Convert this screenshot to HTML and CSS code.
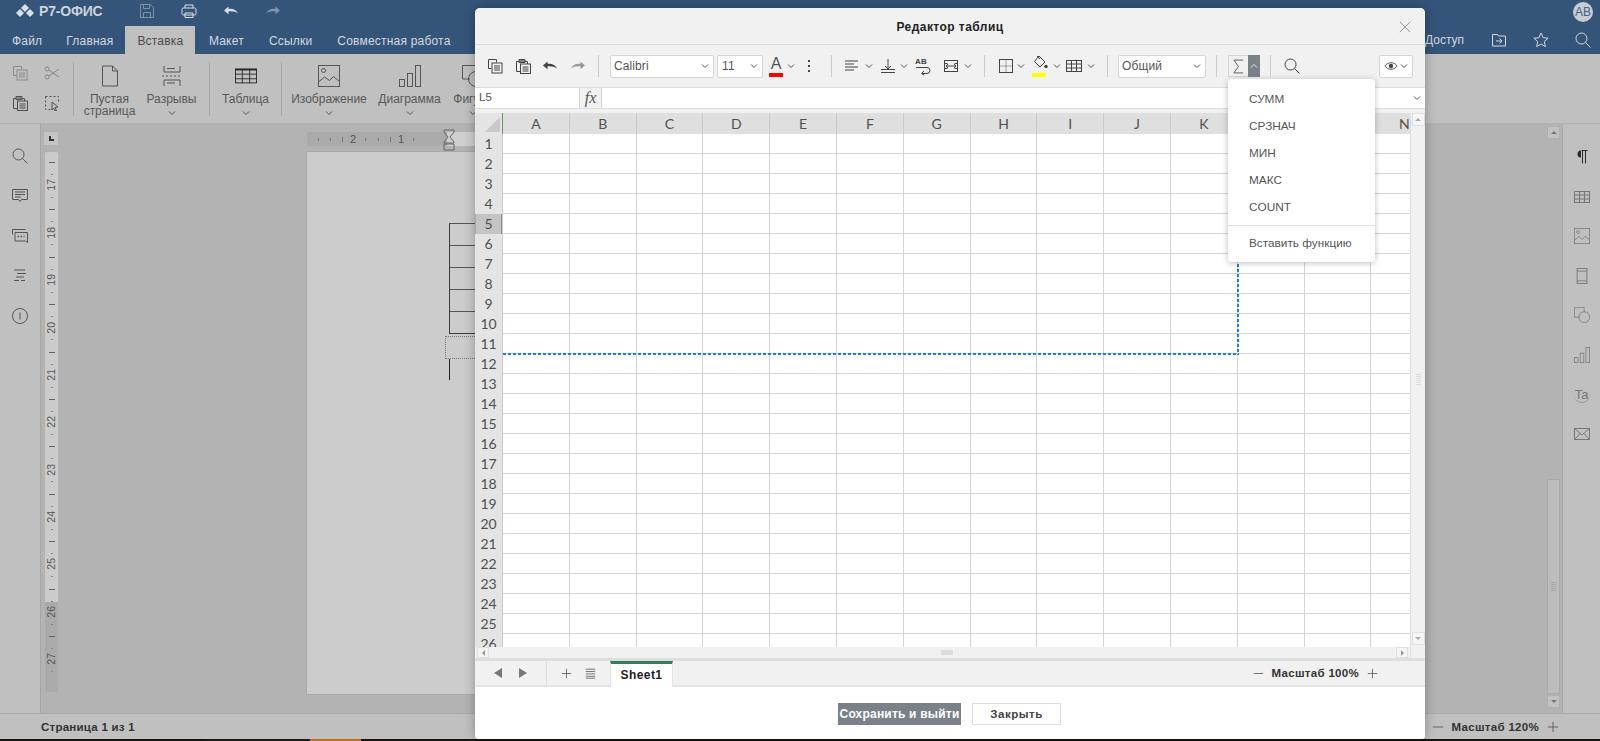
FILE: index.html
```html
<!DOCTYPE html>
<html lang="ru">
<head>
<meta charset="utf-8">
<title>Р7-Офис</title>
<link rel="stylesheet" href="styles.css">
</head>
<body>
<svg class="defs" width="0" height="0" aria-hidden="true">
  <symbol id="copy" viewBox="0 0 16 16"><path d="M1.500 1.500h8v3M1.500 1.500v9h3"/><rect x="5" y="5" width="10" height="10"/><path d="M7 8h6M7 10h6M7 12h6"/></symbol>
  <symbol id="paste" viewBox="0 0 16 16"><path d="M4 3.500H1.500v10H5"/><path d="M4 1.500h6v3H4z" fill="#888"/><path d="M10 3.500h2.500V6"/><rect x="5.500" y="6" width="10" height="9.500"/><path d="M7.500 9h6M7.500 11h6M7.500 13h6"/></symbol>
  <symbol id="undo" viewBox="0 0 16 16"><path class="solid" d="M1 7.500l4.500-4v2.300c4.500-.6 8 1 9.500 4.700-2.500-2-5.500-2.700-9.500-2.200v3z"/></symbol>
  <symbol id="redo" viewBox="0 0 16 16"><path class="solid" d="M15 7.500l-4.500-4v2.300c-4.500-.6-8 1-9.500 4.700 2.500-2 5.500-2.700 9.500-2.200v3z"/></symbol>
  <symbol id="chev" viewBox="0 0 8 8"><path d="M1 2.500l3 3 3-3"/></symbol>
  <symbol id="chevup" viewBox="0 0 8 8"><path d="M1 5.500l3-3 3 3"/></symbol>
  <symbol id="search" viewBox="0 0 16 16"><circle cx="6.500" cy="6.500" r="5.500"/><path d="M10.500 10.500l5 5"/></symbol>
  <symbol id="align" viewBox="0 0 16 16"><path d="M1 3h13M1 6h9M1 9h13M1 12h9"/></symbol>
  <symbol id="valign" viewBox="0 0 16 16"><path d="M8 1v10M5 8l3 3 3-3M1 11.500h14M1 14.500h14"/></symbol>
  <symbol id="merge" viewBox="0 0 16 16"><rect x="1.500" y="2.500" width="13" height="11"/><path d="M3 8h10M3 8l2-2M3 8l2 2M13 8l-2-2M13 8l-2 2M1.500 5.500h3M11.500 5.500h3M1.500 10.500h3M11.500 10.500h3"/></symbol>
  <symbol id="borders" viewBox="0 0 16 16"><rect x="1.500" y="1.500" width="13" height="13"/><path class="faint" d="M8 1.500v13M1.500 8h13"/></symbol>
  <symbol id="fill" viewBox="0 0 16 16"><path d="M7 1l6 6-5 5-5.500-5.500z"/><path d="M5 1l3 3"/><circle class="solid" cx="14" cy="11.500" r="1.700"/></symbol>
  <symbol id="table" viewBox="0 0 16 16"><rect x="0.500" y="2.500" width="15" height="11"/><path d="M0.500 6h15M0.500 10h15M5.500 2.500v11M10.500 2.500v11"/></symbol>
  <symbol id="eye" viewBox="0 0 16 16"><path d="M1 8c3-5 11-5 14 0-3 5-11 5-14 0z"/><circle class="solid" cx="8" cy="8" r="2.500"/></symbol>
  <symbol id="sigma" viewBox="0 0 12 16"><path d="M11 1H1l5 7-5 7h10"/></symbol>
  <symbol id="plus" viewBox="0 0 14 14"><path d="M7 1v12M1 7h12"/></symbol>
  <symbol id="minus" viewBox="0 0 14 14"><path d="M1 7h12"/></symbol>
  <symbol id="list" viewBox="0 0 14 14"><path d="M1 1.500h12M1 4.500h12M1 7.500h12M1 10.500h12M1 13h12"/></symbol>
  <symbol id="close" viewBox="0 0 14 14"><path d="M1 1l12 12M13 1L1 13"/></symbol>
  <symbol id="save" viewBox="0 0 16 16"><path d="M1.500 1.500h10l3 3v10h-13z"/><path d="M4.500 1.500v4h6v-4M4.500 14.500v-5h7v5"/></symbol>
  <symbol id="print" viewBox="0 0 16 16"><rect x="1" y="5" width="14" height="7" rx="1.500"/><path d="M4 5V2h8v3M4 10h8v4.500H4z"/></symbol>
  <symbol id="folder" viewBox="0 0 16 16"><path d="M1.500 2.500h5l1 1.500h7v10h-13z"/><path d="M5 9h6M8.500 6.500L11 9l-2.500 2.500"/></symbol>
  <symbol id="star" viewBox="0 0 16 16"><path d="M8 1l2.100 4.700 5 .5-3.800 3.400 1.100 5L8 12l-4.400 2.600 1.100-5L.9 6.200l5-.5z"/></symbol>
  <symbol id="cut" viewBox="0 0 16 16"><circle cx="3" cy="4" r="2"/><circle cx="3" cy="12" r="2"/><path d="M4.800 5L15 12M4.800 11L15 4"/></symbol>
  <symbol id="select" viewBox="0 0 16 16"><path class="dots" d="M1.500 1.500h13v6M1.500 1.500v13h6"/><path d="M8 7l6 5-3 .5 1.500 3-1.500.5-1.500-3-1.500 2z"/></symbol>
  <symbol id="blank" viewBox="0 0 18 22"><path d="M1.500 1h10l5 5v15h-15z"/><path d="M11.500 1v5h5"/></symbol>
  <symbol id="breaks" viewBox="0 0 20 22"><path d="M2 1v6h16V1M5 3.500h8M2 21v-6h16v6M5 18h8"/><path class="dots" d="M0 11h20"/></symbol>
  <symbol id="grid-big" viewBox="0 0 24 16"><path class="thick" d="M0 1h24"/><rect x="0.500" y="0.500" width="23" height="15"/><path d="M0 6h24M0 11h24M8 0v16M16 0v16"/></symbol>
  <symbol id="image" viewBox="0 0 22 22"><rect x="0.500" y="0.500" width="21" height="21"/><circle cx="5.500" cy="5.500" r="2"/><path d="M0.500 17l6-5 5 3.500 4-4 6 5"/></symbol>
  <symbol id="chart" viewBox="0 0 22 22"><rect x="0.500" y="14.500" width="5" height="7"/><rect x="8.500" y="8.500" width="5" height="13"/><rect x="16.500" y="0.500" width="5" height="21"/></symbol>
  <symbol id="shape" viewBox="0 0 22 22"><path d="M8 14H0.500V0.500H14V7"/><circle cx="14" cy="14" r="7.500"/></symbol>
  <symbol id="comment" viewBox="0 0 16 16"><path d="M0.500 1.500h15v10H9.500L8 13.500 6.500 11.500h-6z"/><path d="M3 4h10M3 6.500h10M3 9h6"/></symbol>
  <symbol id="chat" viewBox="0 0 16 16"><path d="M0.500 6.500V1.500h13"/><path d="M3 4.500h12.500v10l-2-1.500H3z"/><path class="dots2" d="M5.500 8.500h7"/></symbol>
  <symbol id="nav" viewBox="0 0 16 16"><path d="M2 2h11M5 5.500h9M4 9h8M2 12.500h5M9 12.500h4"/></symbol>
  <symbol id="info" viewBox="0 0 16 16"><circle cx="8" cy="8" r="7.500"/><path d="M8 4.500v7"/></symbol>
  <symbol id="para" viewBox="0 0 16 16"><path class="solid" d="M7 1.500a3.500 3.500 0 0 0 0 7z"/><path d="M7.500 1.500h6M8.500 1.500v13M11.500 1.500v13"/></symbol>
  <symbol id="header" viewBox="0 0 16 18"><rect x="2.500" y="0.500" width="11" height="17"/><path d="M2.500 3.500h11M2.500 14.500h11"/></symbol>
  <symbol id="mail" viewBox="0 0 16 14"><rect x="0.500" y="1.500" width="15" height="11"/><path d="M0.500 1.500L8 8l7.500-6.500M0.500 12.500l5.500-6M15.500 12.500l-5.500-6"/></symbol>
</svg>

<div class="app">
  <header class="titlebar">
    <div class="logo">
      <svg class="logo-mark" viewBox="0 0 20 14" aria-hidden="true"><path d="M10 0l4 4-4 4-4-4zM5 5l4 4-4 4-4-4zM15 5l4 4-4 4-4-4z"/></svg>
      <span>Р7-ОФИС</span>
    </div>
    <svg class="tic dim"><use href="#save"/></svg>
    <svg class="tic"><use href="#print"/></svg>
    <svg class="tic"><use href="#undo"/></svg>
    <svg class="tic dim"><use href="#redo"/></svg>
    <div class="avatar">АВ</div>
  </header>

  <nav class="tabs">
    <span class="tab">Файл</span>
    <span class="tab">Главная</span>
    <span class="tab active">Вставка</span>
    <span class="tab">Макет</span>
    <span class="tab">Ссылки</span>
    <span class="tab">Совместная работа</span>
    <div class="tabs-right">
      <span class="access">Доступ</span>
      <svg class="ric"><use href="#folder"/></svg>
      <svg class="ric"><use href="#star"/></svg>
      <svg class="ric"><use href="#search"/></svg>
    </div>
  </nav>

  <section class="ribbon">
    <div class="mini-grid">
      <svg class="ri-s dim"><use href="#copy"/></svg>
      <svg class="ri-s dim"><use href="#cut"/></svg>
      <svg class="ri-s"><use href="#paste"/></svg>
      <svg class="ri-s"><use href="#select"/></svg>
    </div>
    <i class="rsep"></i>
    <div class="big w-blank"><svg class="big-ic"><use href="#blank"/></svg><span>Пустая<br>страница</span></div>
    <div class="big w-break"><svg class="big-ic"><use href="#breaks"/></svg><span>Разрывы</span><svg class="rchev"><use href="#chev"/></svg></div>
    <i class="rsep"></i>
    <div class="big w-table"><svg class="big-ic dark"><use href="#grid-big"/></svg><span>Таблица</span><svg class="rchev"><use href="#chev"/></svg></div>
    <i class="rsep"></i>
    <div class="big w-image"><svg class="big-ic"><use href="#image"/></svg><span>Изображение</span><svg class="rchev"><use href="#chev"/></svg></div>
    <div class="big w-chart"><svg class="big-ic"><use href="#chart"/></svg><span>Диаграмма</span><svg class="rchev"><use href="#chev"/></svg></div>
    <div class="big w-shape"><svg class="big-ic"><use href="#shape"/></svg><span>Фигура</span><svg class="rchev"><use href="#chev"/></svg></div>
  </section>

  <main class="workspace">
    <aside class="leftbar">
      <svg class="side"><use href="#search"/></svg>
      <svg class="side"><use href="#comment"/></svg>
      <svg class="side"><use href="#chat"/></svg>
      <svg class="side"><use href="#nav"/></svg>
      <svg class="side"><use href="#info"/></svg>
    </aside>

    <div class="doc">
      <div class="vcol">
        <div class="tabstop"><b></b></div>
        <div class="vruler">
          <span class="vcell"><em>17</em></span><span class="vcell"><em>18</em></span><span class="vcell"><em>19</em></span><span class="vcell"><em>20</em></span><span class="vcell"><em>21</em></span><span class="vcell"><em>22</em></span><span class="vcell"><em>23</em></span><span class="vcell"><em>24</em></span><span class="vcell"><em>25</em></span><span class="vcell"><em>26</em></span><span class="vcell"><em>27</em></span>
        </div>
      </div>
      <div class="pagecol">
        <div class="hruler">
          <span class="hcell hfirst"></span>
          <span class="hcell">2</span>
          <span class="hcell">1</span>
          <span class="hlight"></span>
          <svg class="hourglass" viewBox="0 0 12 22"><path d="M1 1h10v2L7 8l4 5v1H1v-1l4-5-4-5zM1 15h10v6H1z"/></svg>
        </div>
        <div class="page">
          <div class="dtable">
            <div class="drow"></div><div class="drow"></div><div class="drow"></div><div class="drow"></div><div class="drow"></div>
          </div>
          <div class="dbox"></div>
          <div class="caret"></div>
        </div>
      </div>
      <div class="dscroll">
        <span class="sbtn up"></span>
        <span class="strack"><span class="sthumb"></span></span>
        <span class="sbtn down"></span>
      </div>
    </div>

    <aside class="rightbar">
      <svg class="side strong"><use href="#para"/></svg>
      <svg class="side"><use href="#table"/></svg>
      <svg class="side"><use href="#image"/></svg>
      <svg class="side"><use href="#header"/></svg>
      <svg class="side"><use href="#shape"/></svg>
      <svg class="side"><use href="#chart"/></svg>
      <span class="side ta">Ta</span>
      <svg class="side"><use href="#mail"/></svg>
    </aside>
  </main>

  <footer class="status">
    <span class="pageinfo">Страница 1 из 1</span>
    <div class="zoomer">
      <svg class="zi"><use href="#minus"/></svg>
      <span>Масштаб 120%</span>
      <svg class="zi"><use href="#plus"/></svg>
    </div>
  </footer>
  <div class="taskstrip"><i class="s1"></i><i class="s2"></i><i class="s3"></i></div>
</div>

<div class="modal">
  <div class="m-title">
    <span>Редактор таблиц</span>
    <svg class="m-close"><use href="#close"/></svg>
  </div>

  <div class="m-tools">
    <svg class="ic"><use href="#copy"/></svg>
    <svg class="ic m12"><use href="#paste"/></svg>
    <svg class="ic m11"><use href="#undo"/></svg>
    <svg class="ic m12 off"><use href="#redo"/></svg>
    <i class="sep m12"></i>
    <div class="combo font m11">Calibri<svg class="chev"><use href="#chev"/></svg></div>
    <div class="combo size m3">11<svg class="chev"><use href="#chev"/></svg></div>
    <div class="acolor m6">A<b></b></div>
    <svg class="chev m4"><use href="#chev"/></svg>
    <div class="dots m11"><b></b><b></b><b></b></div>
    <i class="sep m19"></i>
    <svg class="ic m12"><use href="#align"/></svg>
    <svg class="chev m5"><use href="#chev"/></svg>
    <svg class="ic m7"><use href="#valign"/></svg>
    <svg class="chev m4"><use href="#chev"/></svg>
    <div class="wrap m7"><span>AB</span><svg viewBox="0 0 16 8"><path d="M1 1.500h11a3 3 0 0 1 0 6H7M9 5l-2.500 2.500L9 9"/></svg></div>
    <svg class="ic m12"><use href="#merge"/></svg>
    <svg class="chev m5"><use href="#chev"/></svg>
    <i class="sep m12"></i>
    <svg class="ic m13"><use href="#borders"/></svg>
    <svg class="chev m3"><use href="#chev"/></svg>
    <div class="fillic m7"><svg class="ic"><use href="#fill"/></svg><b></b></div>
    <svg class="chev m5"><use href="#chev"/></svg>
    <svg class="ic m5"><use href="#table"/></svg>
    <svg class="chev m5"><use href="#chev"/></svg>
    <i class="sep m12"></i>
    <div class="combo fmt m10">Общий<svg class="chev"><use href="#chev"/></svg></div>
    <i class="sep m10"></i>
    <div class="sum m11"><span class="sum-s"><svg class="sigma"><use href="#sigma"/></svg></span><span class="sum-a"><svg class="chev"><use href="#chevup"/></svg></span></div>
    <i class="sep m10"></i>
    <svg class="ic search m13"><use href="#search"/></svg>
    <div class="view"><svg class="ic"><use href="#eye"/></svg><svg class="chev"><use href="#chev"/></svg></div>
  </div>

  <div class="m-formula">
    <span class="namebox">L5</span>
    <span class="fx">fx</span>
    <span class="finput"><svg class="chev"><use href="#chev"/></svg></span>
  </div>

  <div class="sheet">
    <div class="sheet-main">
      <div class="colhead">
        <span class="corner"><i></i></span>
        <span class="col">A</span><span class="col">B</span><span class="col">C</span><span class="col">D</span><span class="col">E</span><span class="col">F</span><span class="col">G</span><span class="col">H</span><span class="col">I</span><span class="col">J</span><span class="col">K</span><span class="col">L</span><span class="col">M</span><span class="col">N</span>
      </div>
      <div class="gridwrap">
        <div class="rowhead">
          <span>1</span><span>2</span><span>3</span><span>4</span><span class="cur">5</span><span>6</span><span>7</span><span>8</span><span>9</span><span>10</span><span>11</span><span>12</span><span>13</span><span>14</span><span>15</span><span>16</span><span>17</span><span>18</span><span>19</span><span>20</span><span>21</span><span>22</span><span>23</span><span>24</span><span>25</span><span>26</span>
        </div>
        <div class="cells"><div class="selection"></div></div>
      </div>
      <div class="hscroll">
        <span class="hbtn left"></span>
        <span class="hgrip"></span>
        <span class="hbtn right"></span>
      </div>
    </div>
    <div class="vscroll">
      <span class="vbtn up"></span>
      <span class="vgrip"></span>
      <span class="vbtn down"></span>
    </div>
  </div>

  <div class="m-sheets">
    <div class="sh-nav"><i class="tri-l"></i><i class="tri-r"></i></div>
    <div class="sh-add"><svg class="zi2"><use href="#plus"/></svg><svg class="zi2"><use href="#list"/></svg></div>
    <span class="sh-tab">Sheet1</span>
    <div class="m-zoom">
      <svg class="zi2"><use href="#minus"/></svg>
      <span>Масштаб 100%</span>
      <svg class="zi2"><use href="#plus"/></svg>
    </div>
  </div>

  <div class="m-foot">
    <button class="btn primary">Сохранить и выйти</button>
    <button class="btn">Закрыть</button>
  </div>

  <ul class="popup">
    <li>СУММ</li>
    <li>СРЗНАЧ</li>
    <li>МИН</li>
    <li>МАКС</li>
    <li>COUNT</li>
    <li class="div"></li>
    <li>Вставить функцию</li>
  </ul>
</div>
</body>
</html>
```
FILE: styles.css
```css
* { box-sizing: border-box; }
html, body { margin: 0; padding: 0; height: 100%; overflow: hidden; }
body { font-family: "Liberation Sans", Arial, sans-serif; font-size: 12px; color: #444; background: #b3b3b3; }
.defs { position: absolute; }
svg { display: block; fill: none; stroke: currentColor; stroke-width: 1; flex: none; overflow: visible; }
svg .solid { fill: currentColor; stroke: none; }
svg .faint { stroke-opacity: .45; }
svg .dots { stroke-dasharray: 2 2; }
svg .dots2 { stroke-dasharray: 1.500 1.500; stroke-width: 1.500; }
svg .thick { stroke-width: 2; }

.app { height: 741px; display: flex; flex-direction: column; }

/* title bar */
.titlebar { height: 26px; background: #34547a; display: flex; align-items: center; flex: none; color: #dce2e9; padding-bottom: 5px; }
.logo { width: 139px; padding-left: 15px; display: flex; align-items: center; gap: 4px; font-weight: 700; font-size: 14px; letter-spacing: -.2px; color: #ccd3dc; }
.logo-mark { width: 20px; height: 14px; fill: #d9dfe6; stroke: none; }
.tic { width: 16px; height: 16px; margin-right: 26px; color: #d9dfe6; }
.tic.dim { color: #7d92ab; }
.avatar { margin-left: auto; margin-right: 7px; margin-top: 2px; width: 20px; height: 20px; border-radius: 50%; background: #c6ccd4; color: #48617f; font-size: 12px; display: flex; align-items: center; justify-content: center; }

.tabs { height: 28px; background: #34547a; display: flex; flex: none; color: #d3d9e0; font-size: 12px; letter-spacing: .2px; line-height: 30px; }
.tab { padding: 0 12px; }
.tab.active { background: #c0c0c0; color: #4b4b4b; }
.tab.active ~ .tab { padding: 0 12.500px; }
.tab.active + .tab { margin-left: 1px; }
.tabs-right { margin-left: auto; display: flex; align-items: center; padding-right: 9px; gap: 26px; letter-spacing: 0; }
.access { width: 40px; }
.ric { width: 16px; height: 16px; }

/* ribbon */
.ribbon { height: 70px; flex: none; background: #c0c0c0; border-bottom: 1px solid #b2b2b2; display: flex; padding: 8px 0 0 0; color: #585858; line-height: 12px; text-align: center; }
.mini-grid { width: 73px; height: 54px; padding: 3px 0 0 12px; display: grid; grid-template-columns: 16px 16px; column-gap: 16px; row-gap: 14px; align-content: start; }
.ri-s { width: 16px; height: 16px; color: #505050; }
.ri-s.dim { color: #8a8a8a; }
.rsep { width: 1px; height: 54px; background: #a9a9a9; flex: none; }
.big { display: flex; flex-direction: column; align-items: center; flex: none; }
.big-ic { width: 22px; height: 22px; margin: 3px 0 6px; color: #555; }
.big-ic.dark { color: #2a2a2a; }
.rchev { width: 8px; height: 8px; margin-top: 4px; color: #555; }
.w-blank { width: 71px; }
.w-break { width: 53px; margin-right: 11px; }
.w-table { width: 71px; }
.w-image { width: 94px; }
.w-chart { width: 67px; }
.w-shape { width: 60px; }

/* workspace */
.workspace { flex: 1; display: flex; min-height: 0; }
.leftbar { width: 41px; flex: none; background: #c0c0c0; border-right: 1px solid #a6a6a6; display: flex; flex-direction: column; align-items: center; padding-top: 24px; gap: 24px; }
.side { width: 16px; height: 16px; color: #555; }
.doc { flex: 1; display: flex; background: #b3b3b3; padding-top: 7px; min-width: 0; }
.vcol { width: 266px; flex: none; padding-left: 2px; }
.tabstop { width: 16px; height: 15px; background: #c4c4c4; border: 1px solid #b0b0b0; padding: 4px 0 0 5px; }
.tabstop b { display: block; width: 5px; height: 5px; border-left: 2px solid #333; border-bottom: 2px solid #333; }
.vruler { width: 13px; height: 540px; margin: 6px 0 0 2px; background: linear-gradient(#cbcbcb 0, #cbcbcb 450px, #aaa 450px); padding-top: 10px; border-radius: 2px; display: flex; flex-direction: column; overflow: hidden; }
.vcell { height: 47.400px; flex: none; display: flex; align-items: center; justify-content: center; padding-bottom: 1px;
  background:
    linear-gradient(#666, #666) center 0 / 6px 1px no-repeat,
    linear-gradient(#888, #888) center 12px / 2px 1px no-repeat,
    linear-gradient(#888, #888) center 35px / 2px 1px no-repeat; }
.vcell em { font-style: normal; font-size: 10.500px; color: #555; writing-mode: vertical-rl; transform: rotate(180deg); line-height: 13px; }
.pagecol { width: 700px; flex: none; }
.hruler { width: 700px; height: 14px; margin-top: 1px; display: flex; background: #aaa; color: #555; font-size: 11px; line-height: 14px; position: relative; }
.hcell { width: 48px; text-align: center; flex: none;
  background:
    linear-gradient(#777, #777) 1px center / 1px 3px no-repeat,
    linear-gradient(#777, #777) 13px center / 1px 5px no-repeat,
    linear-gradient(#777, #777) 36px center / 1px 3px no-repeat; }
.hcell.hfirst { width: 22px; background: linear-gradient(#777, #777) 11px center / 1px 3px no-repeat; }
.hlight { flex: 1; margin-left: 22px; background: #cfcfcf; }
.hourglass { position: absolute; left: 136px; top: -3px; width: 12px; height: 22px; color: #666; fill: transparent; }
.page { width: 700px; height: 542px; margin-top: 6px; background: #ccc; box-shadow: 0 0 0 1px #a8a8a8; padding-top: 71px; }
.dtable { margin-left: 142px; border-left: 1px solid #3c3c3c; border-bottom: 1px solid #3c3c3c; }
.drow { height: 22px; border-top: 1px solid #555; }
.dbox { margin: 2px 0 0 138px; height: 23px; border: 1px dotted #777; }
.caret { margin-left: 142px; width: 1px; height: 21px; background: #222; }
.dscroll { margin-left: auto; width: 13px; margin-right: 2px; margin-top: -5px; display: flex; flex-direction: column; gap: 1px; padding-bottom: 5px; }
.sbtn { height: 13px; flex: none; background: #c2c2c2; border: 1px solid #b0b0b0; display: flex; align-items: center; justify-content: center; }
.sbtn::before { content: ""; border-left: 3px solid transparent; border-right: 3px solid transparent; }
.sbtn.up::before { border-bottom: 3px solid #777; }
.sbtn.down::before { border-top: 3px solid #777; }
.strack { flex: 1; display: flex; flex-direction: column; justify-content: flex-end; }
.sthumb { height: 215px; border: 1px solid #aaa; background: repeating-linear-gradient(to bottom, #a8a8a8 0, #a8a8a8 1px, transparent 1px, transparent 2px) center / 5px 10px no-repeat, #bcbcbc; }
.rightbar { width: 38px; flex: none; background: #c0c0c0; border-left: 1px solid #a9a9a9; display: flex; flex-direction: column; align-items: center; padding-top: 25px; gap: 23.600px; }
.rightbar .side { color: #777; }
.rightbar .side.strong { color: #2a2a2a; }
.ta { font-size: 13px; line-height: 16px; text-align: center; border-bottom: 1px solid #999; border-radius: 0 0 50% 50%; }

.status { height: 26px; flex: none; background: #c0c0c0; border-top: 1px solid #a9a9a9; display: flex; align-items: center; color: #333; }
.pageinfo { margin-left: 41px; font-weight: 700; letter-spacing: .25px; font-size: 11.500px; }
.zoomer { margin-left: auto; display: flex; align-items: center; font-weight: 700; font-size: 11.500px; letter-spacing: .3px; gap: 8px; padding-right: 41px; }
.zi { width: 12px; height: 12px; color: #555; }
.taskstrip { height: 2px; flex: none; background: #1a1410; display: flex; }
.taskstrip i { display: block; height: 2px; }
.s1 { width: 206px; }
.s2 { width: 104px; background: #1f1a1a; }
.s3 { width: 51px; background: #c6701e; }

/* modal */
.modal { position: absolute; left: 475px; top: 8px; width: 950px; height: 731px; background: #fff; border-radius: 5px 5px 4px 4px; box-shadow: 0 0 12px rgba(0,0,0,.3); display: flex; flex-direction: column; overflow: visible; }
.m-title { height: 37px; flex: none; background: #f1f1f1; border-bottom: 1px solid #dcdcdc; border-radius: 5px 5px 0 0; display: flex; align-items: center; justify-content: center; position: relative; font-weight: 700; font-size: 12px; letter-spacing: .45px; color: #222; padding-top: 2px; }
.m-close { position: absolute; right: 14px; top: 13px; width: 12px; height: 12px; color: #888; }
.m-tools { height: 43px; flex: none; background: #f1f1f1; display: flex; align-items: center; padding: 0 12px; color: #444; border-bottom: 1px solid #dcdcdc; }
.ic { width: 16px; height: 16px; flex: none; }
.ic.off { color: #999; }
.chev { width: 8px; height: 8px; flex: none; color: #555; }
.sep { display: block; width: 1px; height: 22px; background: #ccc; flex: none; }
.m3 { margin-left: 3px; } .m4 { margin-left: 4px; } .m5 { margin-left: 5px; } .m6 { margin-left: 6px; } .m7 { margin-left: 7px; }
.m10 { margin-left: 10px; } .m11 { margin-left: 11px; } .m12 { margin-left: 12px; } .m13 { margin-left: 13px; } .m19 { margin-left: 19px; }
.combo { height: 23px; background: #fff; border: 1px solid #d6d6d6; border-radius: 2px; display: flex; align-items: center; justify-content: space-between; padding: 0 4px 0 3px; color: #555; flex: none; letter-spacing: .1px; }
.font { width: 104px; } .size { width: 46px; padding-left: 4px; } .fmt { width: 88px; }
.acolor { width: 14px; height: 22px; flex: none; text-align: center; font-size: 16px; line-height: 18px; color: #555; position: relative; }
.acolor b { position: absolute; left: 0; right: 0; bottom: 0; height: 4px; background: #f00; }
.dots { width: 6px; display: flex; flex-direction: column; gap: 3px; align-items: center; flex: none; }
.dots b { width: 2px; height: 2px; background: #444; }
.wrap { width: 16px; height: 18px; flex: none; font-size: 8px; font-weight: 700; line-height: 9px; letter-spacing: .2px; }
.wrap span { display: block; }
.wrap svg { width: 16px; height: 8px; }
.fillic { width: 16px; height: 22px; position: relative; flex: none; }
.fillic b { position: absolute; left: 0; right: 2px; bottom: 0; height: 4px; background: #ff0; }
.sum { display: flex; height: 22px; flex: none; }
.sum-s { width: 20px; border: 1px solid #d6d6d6; border-right: 0; display: flex; align-items: center; justify-content: center; color: #555; }
.sigma { width: 11px; height: 15px; }
.sum-a { width: 12px; background: #7a8189; display: flex; align-items: center; justify-content: center; }
.sum-a .chev { color: #e6e6e6; }
.search { color: #444; }
.view { margin-left: auto; width: 34px; height: 23px; background: #fff; border: 1px solid #d6d6d6; border-radius: 2px; display: flex; align-items: center; justify-content: center; gap: 2px; }
.view .ic { width: 14px; height: 14px; }

.m-formula { height: 21px; flex: none; background: #fff; display: flex; border-bottom: 1px solid #dcdcdc; line-height: 19px; }
.namebox { width: 105px; padding-left: 4px; border-right: 1px solid #d6d6d6; color: #555; font-size: 11.500px; }
.fx { width: 22px; background: #f1f1f1; border-right: 1px solid #d6d6d6; text-align: center; font-family: "Liberation Serif", serif; font-style: italic; font-size: 16px; color: #555; }
.finput { flex: 1; display: flex; align-items: center; justify-content: flex-end; padding-right: 4px; }

.sheet { flex: none; height: 549px; display: flex; background: #f1f1f1; padding-top: 4px; }
.sheet-main { width: 935px; flex: none; display: flex; flex-direction: column; }
.colhead { height: 21px; flex: none; display: flex; background: #dfdfdf; font-family: Lato, sans-serif; font-size: 14px; line-height: 21px; color: #505050; overflow: hidden; }
.corner { width: 28px; flex: none; background: #e4e4e4; border-right: 1px solid #6f8f6f; position: relative; }
.corner i { position: absolute; right: 2px; bottom: 2px; width: 0; height: 0; border-left: 15px solid transparent; border-bottom: 15px solid #c9c9c9; }
.col { width: 66.800px; flex: none; text-align: center; border-right: 1px solid #c9c9c9; }
.gridwrap { height: 513px; flex: none; display: flex; overflow: hidden; }
.rowhead { width: 28px; flex: none; background: #e4e4e4; display: flex; flex-direction: column; font-family: Lato, sans-serif; font-size: 14px; color: #505050; text-align: center; border-right: 1px solid #c9c9c9; }
.rowhead span { height: 20px; flex: none; line-height: 20px; }
.rowhead .cur { background: #c4c4c4; box-shadow: inset -1px 0 #8c8c8c, inset 1px 0 #a8a8a8; }
.cells { flex: 1; position: relative; background-color: #fff;
  background-image:
    repeating-linear-gradient(to right, transparent 0, transparent 65.800px, #d4d4d4 65.800px, #d4d4d4 66.800px),
    repeating-linear-gradient(to bottom, transparent 0, transparent 19px, #d4d4d4 19px, #d4d4d4 20px); }
.selection { position: absolute; left: 0; top: 0; width: 736px; height: 221px;
  background:
    repeating-linear-gradient(to right, #1a7cf0 0, #1a7cf0 3px, transparent 3px, transparent 5px) left bottom / 100% 2px no-repeat,
    repeating-linear-gradient(to bottom, #1a7cf0 0, #1a7cf0 3px, transparent 3px, transparent 5px) right top / 2px 100% no-repeat; }
.hscroll { height: 11px; flex: none; background: #f1f1f1; display: flex; align-items: center; justify-content: space-between; padding: 0 2px; }
.hbtn { width: 12px; height: 11px; background: #f4f4f4; border: 1px solid #e0e0e0; display: flex; align-items: center; justify-content: center; }
.hbtn::before { content: ""; border-top: 3px solid transparent; border-bottom: 3px solid transparent; }
.hbtn.left::before { border-right: 3px solid #999; }
.hbtn.right::before { border-left: 3px solid #999; }
.hgrip { width: 12px; height: 5px; background: #dcdcdc; margin-right: -9px; }
.vscroll { width: 15px; flex: none; display: flex; flex-direction: column; align-items: center; justify-content: space-between; border-left: 1px solid #e0e0e0; padding-bottom: 13px; background: #f1f1f1; }
.vbtn { width: 13px; height: 13px; background: #f6f6f6; border: 1px solid #e0e0e0; display: flex; align-items: center; justify-content: center; }
.vbtn::before { content: ""; border-left: 3px solid transparent; border-right: 3px solid transparent; }
.vbtn.up::before { border-bottom: 3px solid #aaa; }
.vbtn.down::before { border-top: 3px solid #aaa; }
.vgrip { width: 5px; height: 11px; background: repeating-linear-gradient(to bottom, #ddd 0, #ddd 1px, transparent 1px, transparent 2px); }

.m-sheets { height: 29px; flex: none; background: #f1f1f1; border-top: 3px solid #dedede; border-bottom: 2px solid #e4e4e4; display: flex; align-items: stretch; font-weight: 700; color: #333; letter-spacing: .3px; font-size: 11.500px; }
.sh-nav { width: 72px; border-right: 1px solid #dcdcdc; display: flex; align-items: center; justify-content: center; gap: 17px; }
.tri-l { border-top: 5px solid transparent; border-bottom: 5px solid transparent; border-right: 8px solid #777; }
.tri-r { border-top: 5px solid transparent; border-bottom: 5px solid transparent; border-left: 8px solid #777; }
.sh-add { width: 63px; display: flex; align-items: center; justify-content: center; gap: 13px; }
.zi2 { width: 11px; height: 11px; color: #555; }
.sh-tab { width: 63px; height: 26px; background: #fff; border-top: 3px solid #2f7d5b; border-left: 1px solid #e4e4e4; border-right: 1px solid #e4e4e4; text-align: center; line-height: 22px; font-size: 12px; letter-spacing: .4px; color: #222; }
.m-zoom { margin-left: auto; margin-right: 47px; display: flex; align-items: center; gap: 8px; }
.m-foot { flex: 1; background: #fff; display: flex; justify-content: center; align-items: flex-start; gap: 11px; padding-top: 16px; padding-right: 1px; border-radius: 0 0 4px 4px; }
.btn { height: 22px; width: 89px; padding: 0; background: #fff; border: 1px solid #dcdcdc; font: 700 11.500px "Liberation Sans", Arial, sans-serif; letter-spacing: .5px; color: #444; white-space: nowrap; }
.primary { width: 123px; background: #7a8189; border-color: #7a8189; color: #fff; letter-spacing: .2px; font-size: 12px; }

.popup { position: absolute; left: 753px; top: 71px; width: 147px; margin: 0; padding: 7px 0 5px; list-style: none; background: #fff; border-radius: 4px; box-shadow: 0 1px 6px rgba(0,0,0,.25); color: #555; font-size: 11.800px; }
.popup li { height: 27px; line-height: 27px; padding-left: 21px; }
.popup .div { height: 1px; margin: 4px 0; background: #e2e2e2; padding: 0; }
```
